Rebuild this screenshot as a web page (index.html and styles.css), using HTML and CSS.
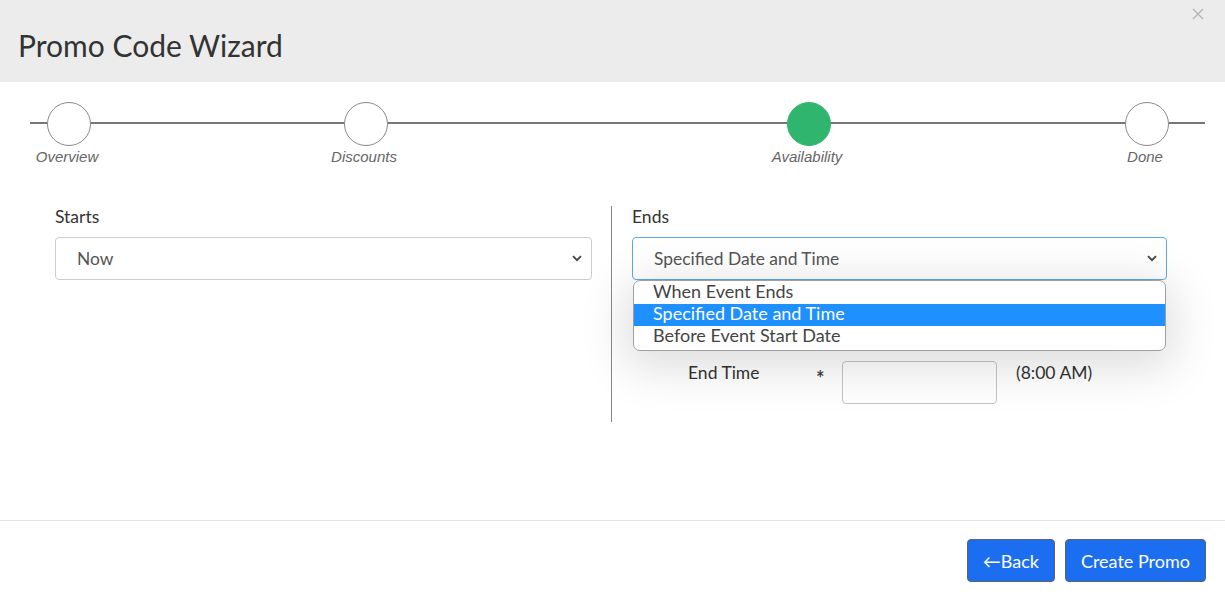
FILE: index.html
```html
<!DOCTYPE html>
<html>
<head>
<meta charset="utf-8">
<link rel="stylesheet" href="styles.css">
</head>
<body>
<div class="modal">
  <header class="modal-header">
    <h1 class="title">Promo Code Wizard</h1>
    <button class="close" aria-label="Close">
      <svg width="12" height="12" viewBox="0 0 12 12"><path d="M1 1L11 11M11 1L1 11" stroke="#b5b5b5" stroke-width="1.4" fill="none"/></svg>
    </button>
  </header>
  <section class="modal-body">
    <div class="stepper">
      <div class="step s1"><span class="dot"></span><span class="label">Overview</span></div>
      <div class="step s2"><span class="dot"></span><span class="label">Discounts</span></div>
      <div class="step s3"><span class="dot active"></span><span class="label">Availability</span></div>
      <div class="step s4"><span class="dot"></span><span class="label">Done</span></div>
    </div>
    <div class="columns">
      <div class="col left">
        <label class="field-label">Starts</label>
        <div class="select">
          <span>Now</span>
          <svg class="chev" width="10" height="7" viewBox="0 0 10 7"><path d="M1 1.2L5 5.2L9 1.2" stroke="#444" stroke-width="1.8" fill="none"/></svg>
        </div>
      </div>
      <div class="col right">
        <label class="field-label">Ends</label>
        <div class="select-wrap">
          <div class="select focus">
            <span>Specified Date and Time</span>
            <svg class="chev" width="10" height="7" viewBox="0 0 10 7"><path d="M1 1.2L5 5.2L9 1.2" stroke="#444" stroke-width="1.8" fill="none"/></svg>
          </div>
          <ul class="options">
            <li>When Event Ends</li>
            <li class="selected">Specified Date and Time</li>
            <li>Before Event Start Date</li>
          </ul>
        </div>
        <div class="time-row">
          <span class="time-label">End Time</span>
          <span class="req">*</span>
          <span class="time-input"></span>
          <span class="time-hint">(8:00 AM)</span>
        </div>
      </div>
    </div>
  </section>
  <footer class="modal-footer">
    <button class="btn">&larr;Back</button>
    <button class="btn">Create Promo</button>
  </footer>
</div>
</body>
</html>
```

FILE: styles.css
```css
* { box-sizing: border-box; }
html, body { margin: 0; padding: 0; background: #fff; }
body {
  font-family: Lato, "Liberation Sans", sans-serif;
  color: #333;
  width: 1225px;
  height: 597px;
  overflow: hidden;
}
.modal { display: flex; flex-direction: column; height: 597px; }
.modal-header {
  height: 82px;
  background: #ececec;
  display: flex;
  align-items: flex-start;
  justify-content: space-between;
  padding: 0 0 0 18px;
}
.title {
  margin: 27px 0 0 0;
  font-size: 30px;
  font-weight: 400;
  line-height: 36px;
  color: #333;
}
.close {
  border: 0;
  background: none;
  padding: 0;
  margin: 8px 21px 0 0;
  width: 12px;
  height: 12px;
  display: block;
}
.close svg { display: block; }
.modal-body { flex: 1; border-bottom: 1px solid #e5e5e5; }
.stepper {
  position: relative;
  margin: 20px 0 0 30px;
  width: 1175px;
  display: flex;
  height: 86px;
}
.stepper::before {
  content: "";
  position: absolute;
  left: 0;
  right: 0;
  top: 20px;
  height: 2px;
  background: #777;
}
.step {
  position: relative;
  width: 80px;
  display: flex;
  flex-direction: column;
  align-items: center;
}
.s1 { margin-left: -1px; }
.s2 { margin-left: 217px; }
.s3 { margin-left: 363px; }
.s4 { margin-left: 258px; }
.dot {
  width: 44px;
  height: 44px;
  border-radius: 50%;
  border: 1px solid #8a8a8a;
  background: #fff;
}
.dot.active { background: #2fb56d; border-color: #2fb56d; }
.label {
  margin-top: 2px;
  margin-right: 4px;
  font-family: "Liberation Sans", Arial, sans-serif;
  font-style: italic;
  font-size: 15px;
  color: #666;
  white-space: nowrap;
  line-height: 18px;
}
.columns {
  display: flex;
  padding: 0 0 0 55px;
  margin-top: 18px;
}
.col { display: flex; flex-direction: column; }
.left { width: 557px; padding-right: 19px; border-right: 1px solid #888; height: 216px; }
.right { width: 555px; padding-left: 20px; padding-top: 0; }
.field-label {
  font-size: 17.5px;
  line-height: 20px;
  margin-top: 1px;
  margin-bottom: 10px;
  color: #333;
}
.select {
  height: 43px;
  border: 1px solid #ccc;
  border-radius: 4px;
  display: flex;
  align-items: center;
  justify-content: space-between;
  padding: 0 9px 0 21px;
  font-size: 17.4px;
  color: #555;
  background: #fff;
}
.select.focus { border-color: #5aa9ea; }
.chev { display: block; }
.select-wrap { position: relative; }
.options {
  position: absolute;
  left: 1px;
  right: 1px;
  top: 43px;
  margin: 0;
  padding: 1px 0 2px;
  list-style: none;
  background: #fff;
  border: 1px solid #a0a0a0;
  border-radius: 7px;
  overflow: hidden;
  box-shadow: 0 10px 45px 8px rgba(0,0,0,0.13);
  z-index: 5;
  font-size: 18px;
  line-height: 18px;
}
.options li { padding: 0 0 4px 19px; color: #444; height: 22px; }
.options li.selected { background: #1e90ff; color: #fff; }
.time-row {
  display: flex;
  align-items: flex-start;
  margin-top: 81px;
  padding-left: 56px;
  font-size: 17.5px;
  color: #333;
}
.time-label { width: 128px; margin-top: 1px; }
.req { width: 26px; font-size: 20px; font-weight: 700; line-height: 20px; margin-top: 7px; color: #444; }
.time-input {
  width: 155px;
  height: 43px;
  border: 1px solid #c4c4c4;
  border-radius: 4px;
  background: transparent;
}
.time-hint { margin-left: 19px; margin-top: 1px; }
.modal-footer {
  height: 76px;
  display: flex;
  justify-content: flex-end;
  align-items: flex-start;
  gap: 10px;
  padding: 18px 19px 0 0;
}
.btn {
  height: 43px;
  padding: 0 15px;
  background: #1b6ef0;
  border: 1px solid #5a6270;
  border-radius: 4px;
  color: #fff;
  font-family: Lato, "Liberation Sans", sans-serif;
  font-size: 18px;
}
```
